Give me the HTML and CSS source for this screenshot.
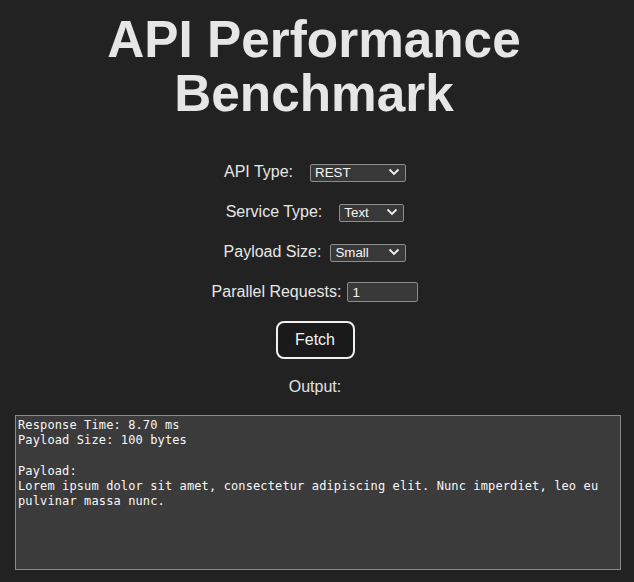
FILE: index.html
```html
<!DOCTYPE html>
<html lang="en">
<head>
<meta charset="utf-8">
<title>API Performance Benchmark</title>
<link rel="stylesheet" href="styles.css">
</head>
<body>
<main class="page">
  <h1 class="title">API Performance Benchmark</h1>
  <form class="controls">
    <div class="row row-wide">
      <label class="label" for="api">API Type:</label>
      <span class="select-wrap w-api">
        <select id="api" class="select"><option>REST</option><option>GraphQL</option><option>gRPC</option></select>
        <svg class="chev" width="12" height="8" viewBox="0 0 12 8"><path d="M1.5 1.5 L6 6 L10.5 1.5" fill="none" stroke="#f2f2f2" stroke-width="1.8"/></svg>
      </span>
    </div>
    <div class="row row-wide">
      <label class="label" for="svc">Service Type:</label>
      <span class="select-wrap w-svc">
        <select id="svc" class="select"><option>Text</option><option>JSON</option></select>
        <svg class="chev" width="12" height="8" viewBox="0 0 12 8"><path d="M1.5 1.5 L6 6 L10.5 1.5" fill="none" stroke="#f2f2f2" stroke-width="1.8"/></svg>
      </span>
    </div>
    <div class="row">
      <label class="label" for="size">Payload Size:</label>
      <span class="select-wrap w-size">
        <select id="size" class="select"><option>Small</option><option>Medium</option><option>Large</option></select>
        <svg class="chev" width="12" height="8" viewBox="0 0 12 8"><path d="M1.5 1.5 L6 6 L10.5 1.5" fill="none" stroke="#f2f2f2" stroke-width="1.8"/></svg>
      </span>
    </div>
    <div class="row row-tight">
      <label class="label" for="par">Parallel Requests:</label>
      <input id="par" class="input" type="text" value="1">
    </div>
    <button type="button" class="fetch">Fetch</button>
    <div class="output-label">Output:</div>
  </form>
  <div class="output">Response Time: 8.70 ms
Payload Size: 100 bytes

Payload:
Lorem ipsum dolor sit amet, consectetur adipiscing elit. Nunc imperdiet, leo eu pulvinar massa nunc.</div>
</main>
</body>
</html>
```

FILE: styles.css
```css
html, body {
  margin: 0;
  padding: 0;
  background: #222222;
}
body {
  font-family: "Liberation Sans", Arial, sans-serif;
  color: #e3e3e3;
}
.page {
  width: 634px;
  height: 582px;
  overflow: hidden;
}
.title {
  margin: 13px 0 0 0;
  padding-right: 6px;
  font-size: 51.3px;
  line-height: 54px;
  font-weight: bold;
  text-align: center;
  color: #e6e6e6;
}
.controls {
  margin: 0;
  padding: 0 4px 0 0;
  display: flex;
  flex-direction: column;
  align-items: center;
}
.row {
  display: flex;
  align-items: center;
  justify-content: center;
  height: 40px;
  gap: 9px;
  font-size: 16px;
}
.row:first-child { margin-top: 31px; }
.row-wide { gap: 17px; }
.row-tight { gap: 6px; }
.label {
  color: #e6e6e6;
}
.select-wrap {
  position: relative;
  display: inline-block;
  height: 18px;
}
.select {
  appearance: none;
  -webkit-appearance: none;
  box-sizing: border-box;
  width: 100%;
  height: 18px;
  margin: 0;
  padding: 0 0 0 4px;
  border: 1px solid #8d8d8d;
  border-radius: 2px;
  background: #383838;
  color: #f6f6f6;
  font-family: "Liberation Sans", Arial, sans-serif;
  font-size: 13.33px;
  line-height: 16px;
}
.w-api { width: 96px; }
.w-svc { width: 65px; }
.w-size { width: 76px; }
.chev {
  position: absolute;
  right: 6px;
  top: 5px;
  pointer-events: none;
}
.input {
  box-sizing: border-box;
  width: 71px;
  height: 20px;
  margin: 0;
  padding: 0 4px;
  border: 1px solid #8d8d8d;
  border-radius: 2px;
  background: #383838;
  color: #f6f6f6;
  font-family: "Liberation Sans", Arial, sans-serif;
  font-size: 13.33px;
}
.fetch {
  margin-top: 9px;
  box-sizing: border-box;
  width: 79px;
  height: 38px;
  padding: 0;
  border: 2px solid #f0f0f0;
  border-radius: 8px;
  background: #1a1a1a;
  color: #f2f2f2;
  font-family: "Liberation Sans", Arial, sans-serif;
  font-size: 16px;
}
.output-label {
  margin-top: 19px;
  font-size: 16px;
  line-height: 18px;
  color: #e3e3e3;
}
.output {
  box-sizing: border-box;
  margin: 19px 13px 0 15px;
  height: 155px;
  padding: 2px 2px;
  border: 1px solid #8a8a8a;
  background: #3b3b3b;
  color: #f8f8f8;
  font-family: "DejaVu Sans Mono", "Liberation Mono", monospace;
  font-size: 12px;
  letter-spacing: 0.12px;
  line-height: 15.2px;
  white-space: pre-wrap;
}
```
